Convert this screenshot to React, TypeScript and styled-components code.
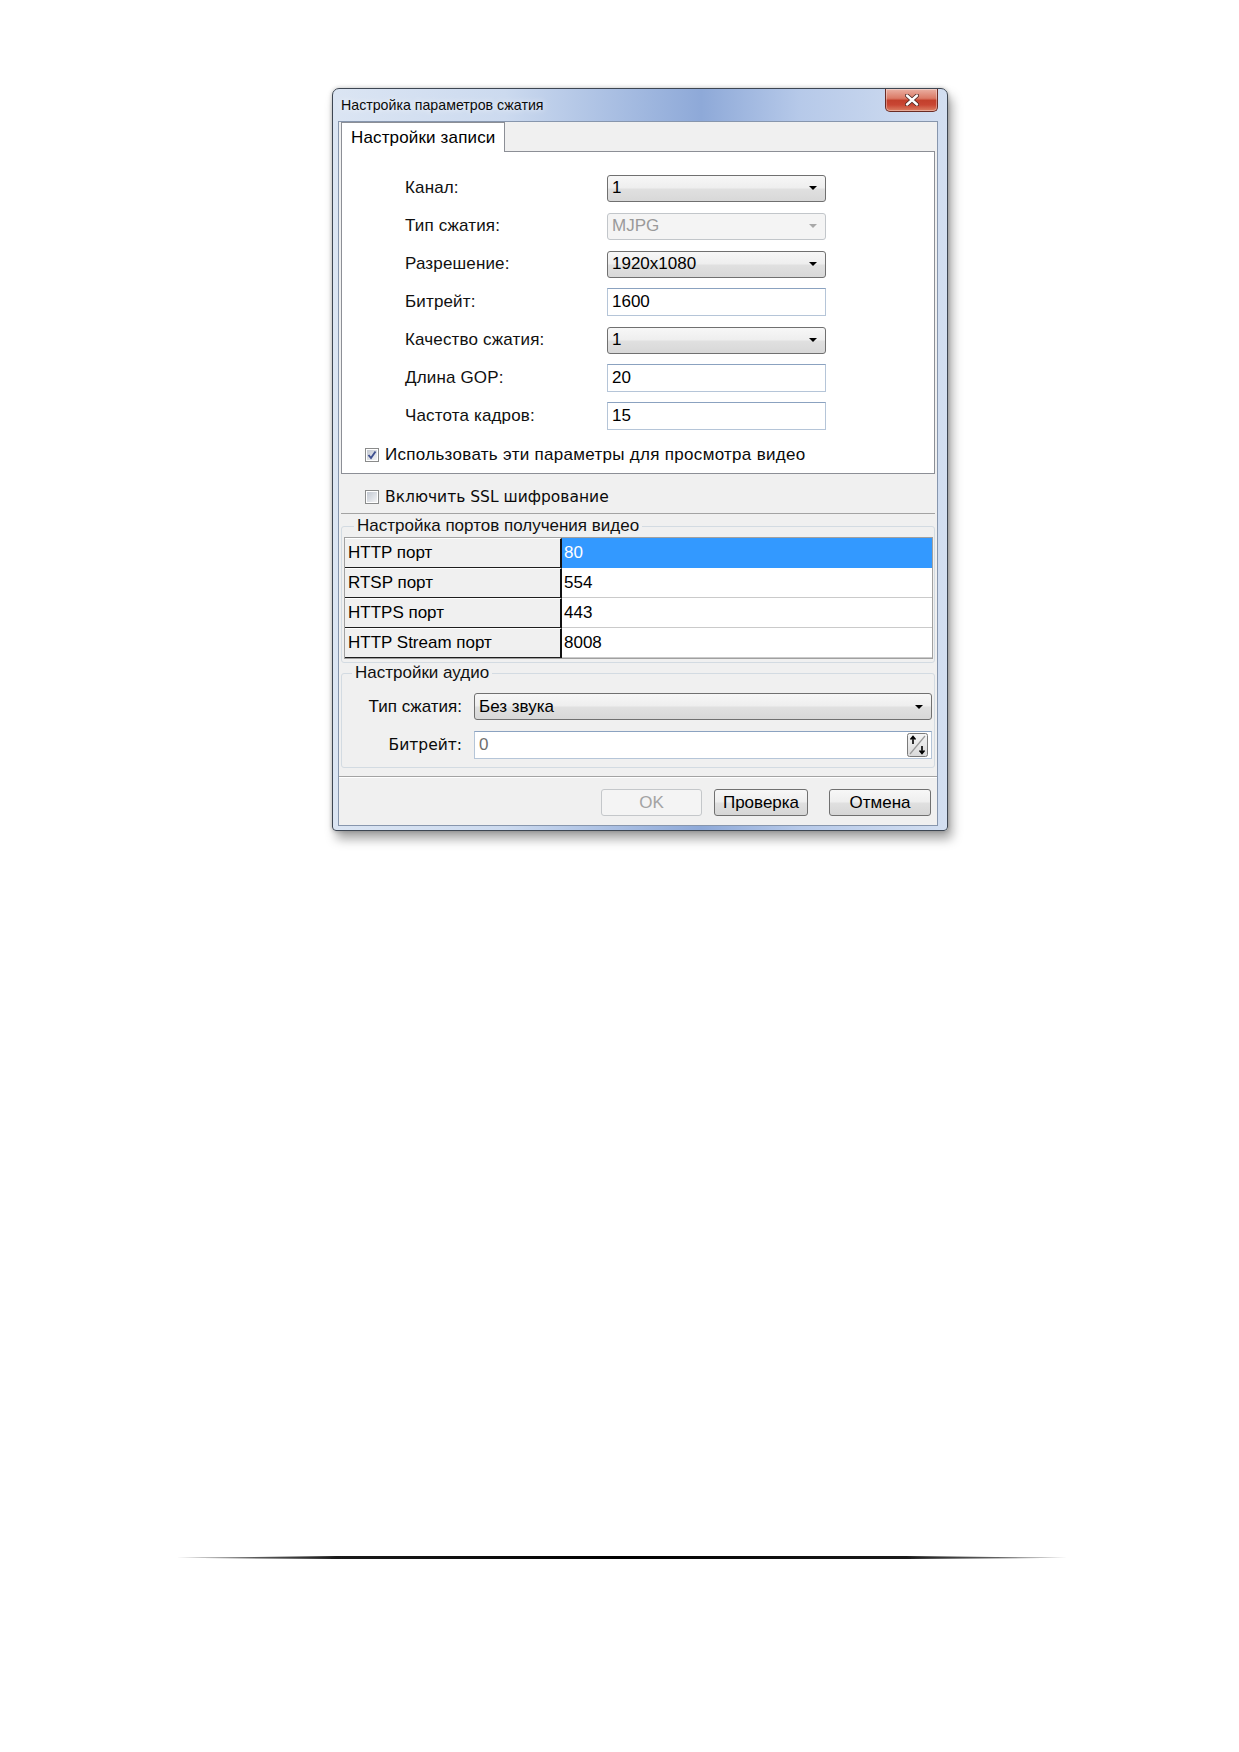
import React from 'react';
import styled, { createGlobalStyle } from 'styled-components';

const GlobalStyle = createGlobalStyle`
  html, body {
    margin: 0;
    padding: 0;
    background: #ffffff;
  }
  body {
    font-family: 'Liberation Sans', Arial, sans-serif;
    color: #000;
  }
`;

const Page = styled.div`
  width: 1239px;
  min-height: 1752px;
  box-sizing: border-box;
  padding-top: 88px;
  display: flex;
  flex-direction: column;
  align-items: flex-start;
`;

/* ---------- window chrome ---------- */

const Window = styled.div`
  width: 616px;
  margin-left: 332px;
  box-sizing: border-box;
  border: 1px solid #3d4652;
  border-radius: 7px 7px 4px 4px;
  padding: 0 9px 4px 5px;
  background: linear-gradient(
    90deg,
    #dbe5f3 0%,
    #ccdaef 28%,
    #9db5de 52%,
    #8ea9d8 60%,
    #b6c9e9 76%,
    #d3dff1 100%
  );
  box-shadow: 0 0 4px rgba(0, 0, 0, 0.25), 4px 8px 11px rgba(0, 0, 0, 0.35);
`;

const TitleBar = styled.div`
  height: 32px;
  display: flex;
  align-items: flex-start;
  justify-content: space-between;
`;

const Title = styled.span`
  align-self: center;
  padding-left: 3px;
  font-size: 14.2px;
  color: #0b0b0b;
  text-shadow: 0 0 6px rgba(255, 255, 255, 0.9);
`;

const CloseButton = styled.div`
  width: 53px;
  height: 23px;
  box-sizing: border-box;
  border: 1px solid #6a2b24;
  border-top: none;
  border-radius: 0 0 5px 5px;
  background: linear-gradient(
    180deg,
    #eab0a3 0%,
    #db7a66 42%,
    #c3402c 52%,
    #c94633 72%,
    #dc8064 100%
  );
  display: flex;
  align-items: center;
  justify-content: center;
  box-shadow: inset 0 0 0 1px rgba(255, 255, 255, 0.35);
`;

const Client = styled.div`
  box-sizing: border-box;
  border: 1px solid #8796ad;
  background: #f0f0f0;
  display: flex;
  flex-direction: column;
`;

const Content = styled.div`
  padding: 0 2px;
  display: flex;
  flex-direction: column;
`;

/* ---------- tab control ---------- */

const TabStrip = styled.div`
  height: 29px;
  display: flex;
  align-items: flex-end;
`;

const Tab = styled.div`
  position: relative;
  width: 164px;
  height: 30px;
  margin-bottom: -1px;
  box-sizing: border-box;
  border: 1px solid #8c8f96;
  border-bottom: none;
  background: #ffffff;
  padding: 4px 0 0 9px;
  font-size: 17px;
  line-height: 22px;
  letter-spacing: 0.15px;
`;

const TabPanel = styled.div`
  height: 323px;
  box-sizing: border-box;
  border: 1px solid #8c8f96;
  background: #ffffff;
  padding: 22px 0 0 23px;
  display: flex;
  flex-direction: column;
`;

const FormGrid = styled.div`
  margin-left: 40px;
  display: grid;
  grid-template-columns: 202px 219px;
  grid-auto-rows: 28px;
  row-gap: 10px;
  align-items: center;
`;

const FieldLabel = styled.span`
  font-size: 17px;
  letter-spacing: 0.15px;
  color: #101010;
`;

const Combo = styled.div<{ $disabled?: boolean }>`
  height: 27px;
  box-sizing: border-box;
  border: 1px solid ${p => (p.$disabled ? '#c2c6ca' : '#707070')};
  border-radius: 3px;
  background: ${p =>
    p.$disabled
      ? '#f4f4f4'
      : 'linear-gradient(180deg, #f7f7f7 0%, #eeeeee 48%, #e0e0e0 52%, #d8d8d8 100%)'};
  color: ${p => (p.$disabled ? '#9a9a9a' : '#000')};
  padding: 0 8px 0 4px;
  display: flex;
  align-items: center;
  justify-content: space-between;
  font-size: 17px;
`;

const Arrow = styled.span<{ $disabled?: boolean }>`
  width: 0;
  height: 0;
  border-left: 4px solid transparent;
  border-right: 4px solid transparent;
  border-top: 4px solid ${p => (p.$disabled ? '#a8a8a8' : '#000')};
`;

const Edit = styled.div<{ $muted?: boolean }>`
  height: 28px;
  box-sizing: border-box;
  border: 1px solid #b5c5d8;
  border-top-color: #8ba2c0;
  background: #ffffff;
  padding: 0 4px;
  display: flex;
  align-items: center;
  justify-content: space-between;
  font-size: 17px;
  color: ${p => (p.$muted ? '#6f6f6f' : '#000')};
`;

/* ---------- checkboxes ---------- */

const CheckRow = styled.div<{ $top: number }>`
  margin-top: ${p => p.$top}px;
  height: 20px;
  display: flex;
  align-items: center;
  gap: 6px;
`;

const CheckBox = styled.span`
  width: 14px;
  height: 14px;
  box-sizing: border-box;
  border: 1px solid #8a8b8b;
  padding: 1px;
  background: #ffffff;
  display: flex;
`;

const CheckFill = styled.span`
  flex: 1;
  background: linear-gradient(135deg, #c3c8d1 0%, #dfe2e7 60%, #f3f3f3 100%);
  display: flex;
  align-items: center;
  justify-content: center;
`;

const CheckText = styled.span<{ $heavy?: boolean }>`
  font-family: ${p =>
    p.$heavy ? "'DejaVu Sans', Verdana, sans-serif" : "'Liberation Sans', Arial, sans-serif"};
  font-size: ${p => (p.$heavy ? '15.5px' : '17px')};
  letter-spacing: ${p => (p.$heavy ? '0' : '0.3px')};
  color: #0a0a0a;
`;

const SslRow = styled.div`
  height: 40px;
  box-sizing: border-box;
  padding: 13px 0 0 24px;
  border-bottom: 1px solid #a3a3a3;
`;

/* ---------- group boxes ---------- */

const GroupBox = styled.fieldset<{ $pad: string; $top?: number }>`
  margin: ${p => p.$top ?? 0}px 0 0;
  min-width: 0;
  border: 1px solid #d3dbe2;
  border-radius: 3px;
  padding: ${p => p.$pad};
`;

const Legend = styled.legend`
  margin-left: 10px;
  padding: 0 3px;
  font-size: 17px;
  line-height: 20px;
  color: #101010;
`;

/* ---------- port table ---------- */

const PortTable = styled.div`
  border: 1px solid #a0a0a0;
  display: grid;
  grid-template-columns: 217px 1fr;
  grid-auto-rows: 30px;
  background: #ffffff;
`;

const PortName = styled.div`
  box-sizing: border-box;
  border-top: 1px solid #ffffff;
  border-bottom: 1px solid #1e1e1e;
  border-right: 2px solid #111111;
  background: #f0f0f0;
  padding-left: 3px;
  display: flex;
  align-items: center;
  font-size: 17px;
`;

const PortValue = styled.div<{ $selected?: boolean }>`
  box-sizing: border-box;
  border-bottom: 1px solid ${p => (p.$selected ? '#3399ff' : '#cacaca')};
  background: ${p => (p.$selected ? '#3399ff' : '#ffffff')};
  color: ${p => (p.$selected ? '#ffffff' : '#000')};
  padding-left: 2px;
  display: flex;
  align-items: center;
  font-size: 17px;
`;

/* ---------- audio ---------- */

const AudioGrid = styled.div`
  display: grid;
  grid-template-columns: 120px 458px;
  column-gap: 12px;
  row-gap: 11px;
  align-items: center;
`;

const AudioLabel = styled.span<{ $heavy?: boolean }>`
  text-align: right;
  font-family: ${p =>
    p.$heavy ? "'DejaVu Sans', Verdana, sans-serif" : "'Liberation Sans', Arial, sans-serif"};
  font-size: ${p => (p.$heavy ? '15.5px' : '17px')};
  color: #0a0a0a;
`;

const Spinner = styled.span`
  margin-right: -1px;
  display: flex;
`;

/* ---------- footer ---------- */

const Footer = styled.div`
  margin-top: 8px;
  height: 49px;
  box-sizing: border-box;
  border-top: 1px solid #a3a3a3;
  box-shadow: inset 0 1px 0 #ffffff;
  padding: 12px 6px 0 0;
  display: flex;
  justify-content: flex-end;
  align-items: flex-start;
  gap: 12px;
`;

const Button = styled.div<{ $width: number; $lead?: number; $disabled?: boolean }>`
  width: ${p => p.$width}px;
  margin-left: ${p => p.$lead ?? 0}px;
  height: 27px;
  box-sizing: border-box;
  border: 1px solid ${p => (p.$disabled ? '#c4c7ca' : '#707070')};
  border-radius: 3px;
  background: ${p =>
    p.$disabled
      ? '#f4f4f4'
      : 'linear-gradient(180deg, #f7f7f7 0%, #eeeeee 48%, #e0e0e0 52%, #d6d6d6 100%)'};
  color: ${p => (p.$disabled ? '#a3a3a3' : '#000')};
  display: flex;
  align-items: center;
  justify-content: center;
  font-size: 17px;
`;

/* ---------- page rule ---------- */

const Rule = styled.div`
  margin: 725px 0 0 176px;
  width: 891px;
  height: 3px;
  background: linear-gradient(90deg, #9a9a9a 0%, #1a1a1a 18%, #000 50%, #1a1a1a 82%, #9a9a9a 100%);
  clip-path: polygon(0 60%, 18% 0, 82% 0, 100% 60%, 82% 100%, 18% 100%);
`;

const CloseGlyph = () => (
  <svg width="14" height="12" viewBox="0 0 14 12">
    <path d="M2 1.5 L12 10.5 M12 1.5 L2 10.5" stroke="#4a2420" strokeWidth="4" strokeLinecap="round" />
    <path d="M2 1.5 L12 10.5 M12 1.5 L2 10.5" stroke="#ffffff" strokeWidth="2.4" strokeLinecap="round" />
  </svg>
);

const CheckMark = () => (
  <svg width="10" height="10" viewBox="0 0 10 10">
    <path d="M1.5 5 L4 8 L8.5 1.5" fill="none" stroke="#3f5090" strokeWidth="1.9" />
  </svg>
);

const SpinGlyph = () => (
  <svg width="21" height="24" viewBox="0 0 21 24">
    <defs>
      <linearGradient id="spinFill" x1="0" y1="0" x2="0" y2="1">
        <stop offset="0" stopColor="#f6f6f6" />
        <stop offset="1" stopColor="#d9d9d9" />
      </linearGradient>
    </defs>
    <rect x="0.5" y="0.5" width="20" height="23" rx="2" fill="url(#spinFill)" stroke="#7a7a7a" />
    <path d="M3 21 L18 3" stroke="#9a9a9a" strokeWidth="1.2" />
    <path d="M6 11 V4 M3.5 6.5 L6 3.5 L8.5 6.5" fill="none" stroke="#000" strokeWidth="1.6" />
    <path d="M15 13 V20 M12.5 17.5 L15 20.5 L17.5 17.5" fill="none" stroke="#000" strokeWidth="1.6" />
  </svg>
);

const Check = ({ checked }: { checked?: boolean }) => (
  <CheckBox>
    <CheckFill>{checked && <CheckMark />}</CheckFill>
  </CheckBox>
);

const ports = [
  { name: 'HTTP порт', value: '80', selected: true },
  { name: 'RTSP порт', value: '554' },
  { name: 'HTTPS порт', value: '443' },
  { name: 'HTTP Stream порт', value: '8008' },
];

const App: React.FunctionComponent = () => (
  <Page>
    <GlobalStyle />

    <Window>
      <TitleBar>
        <Title>Настройка параметров сжатия</Title>
        <CloseButton>
          <CloseGlyph />
        </CloseButton>
      </TitleBar>

      <Client>
        <Content>
          <TabStrip>
            <Tab>Настройки записи</Tab>
          </TabStrip>

          <TabPanel>
            <FormGrid>
              <FieldLabel>Канал:</FieldLabel>
              <Combo>
                1<Arrow />
              </Combo>

              <FieldLabel>Тип сжатия:</FieldLabel>
              <Combo $disabled>
                MJPG<Arrow $disabled />
              </Combo>

              <FieldLabel>Разрешение:</FieldLabel>
              <Combo>
                1920x1080<Arrow />
              </Combo>

              <FieldLabel>Битрейт:</FieldLabel>
              <Edit>1600</Edit>

              <FieldLabel>Качество сжатия:</FieldLabel>
              <Combo>
                1<Arrow />
              </Combo>

              <FieldLabel>Длина GOP:</FieldLabel>
              <Edit>20</Edit>

              <FieldLabel>Частота кадров:</FieldLabel>
              <Edit>15</Edit>
            </FormGrid>

            <CheckRow $top={15}>
              <Check checked />
              <CheckText>Использовать эти параметры для просмотра видео</CheckText>
            </CheckRow>
          </TabPanel>

          <SslRow>
            <CheckRow $top={0}>
              <Check />
              <CheckText $heavy>Включить SSL шифрование</CheckText>
            </CheckRow>
          </SslRow>

          <GroupBox $pad="1px 1px 3px 2px" $top={2}>
            <Legend>Настройка портов получения видео</Legend>
            <PortTable>
              {ports.map(port => (
                <React.Fragment key={port.name}>
                  <PortName>{port.name}</PortName>
                  <PortValue $selected={port.selected}>{port.value}</PortValue>
                </React.Fragment>
              ))}
            </PortTable>
          </GroupBox>

          <GroupBox $pad="10px 2px 8px 0">
            <Legend>Настройки аудио</Legend>
            <AudioGrid>
              <AudioLabel>Тип сжатия:</AudioLabel>
              <Combo>
                Без звука<Arrow />
              </Combo>

              <AudioLabel $heavy>Битрейт:</AudioLabel>
              <Edit $muted>
                0
                <Spinner>
                  <SpinGlyph />
                </Spinner>
              </Edit>
            </AudioGrid>
          </GroupBox>
        </Content>

        <Footer>
          <Button $width={101} $disabled>
            OK
          </Button>
          <Button $width={94}>Проверка</Button>
          <Button $width={102} $lead={9}>
            Отмена
          </Button>
        </Footer>
      </Client>
    </Window>

    <Rule />
  </Page>
);

export default App;
